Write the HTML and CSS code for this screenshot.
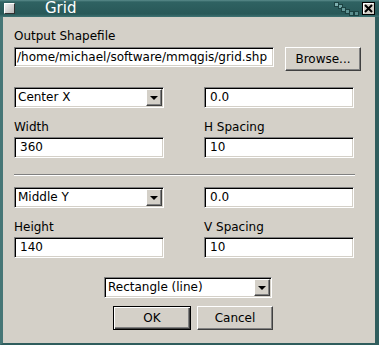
FILE: index.html
```html
<!DOCTYPE html>
<html lang="en">

<head>
  <meta charset="utf-8">
  <title>Grid</title>
  <link rel="stylesheet" href="styles.css">
</head>

<body>
  <div class="window">
    <!-- 标题栏 -->
    <div class="titlebar">
      <span class="menuBox"></span>
      <span class="title">Grid</span>
      <!-- 右上角的装饰小方块和关闭按钮 -->
      <svg class="tbRight" width="42" height="14" viewBox="0 0 42 14">
        <rect x="1.5" y="0.5" width="4" height="4" fill="#7fb0b0" stroke="#1c4242" />
        <rect x="5.5" y="2.5" width="4" height="4" fill="#6fa3a3" stroke="#1c4242" />
        <rect x="8.5" y="5.5" width="4" height="4" fill="#659999" stroke="#1c4242" />
        <rect x="12.5" y="7.5" width="4" height="4" fill="#5f9393" stroke="#1c4242" />
        <rect x="16.5" y="9.5" width="4" height="4" fill="#5a8e8e" stroke="#1c4242" />
        <rect x="21.5" y="9.5" width="4" height="4" fill="#5a8e8e" stroke="#1c4242" />
        <rect x="29.5" y="0.5" width="12" height="12" fill="#d4d0c8" stroke="#000" />
        <path d="M30.5 11.5 V1.5 H40.5" fill="none" stroke="#fff" />
        <path d="M32 3 L39 10 M39 3 L32 10" stroke="#000" stroke-width="2" />
      </svg>
    </div>

    <div class="content">
      <div class="label">Output Shapefile</div>
      <div class="fileRow">
        <div class="entry fileEntry">/home/michael/software/mmqgis/grid.shp</div>
        <div class="btn browse">Browse...</div>
      </div>

      <div class="grid">
        <div class="combo">Center X<span class="arrow"></span></div>
        <div class="entry">0.0</div>
        <div class="field">
          <div class="label">Width</div>
          <div class="entry">360</div>
        </div>
        <div class="field">
          <div class="label">H Spacing</div>
          <div class="entry">10</div>
        </div>
      </div>

      <div class="sep"></div>

      <div class="grid grid2">
        <div class="combo">Middle Y<span class="arrow"></span></div>
        <div class="entry">0.0</div>
        <div class="field">
          <div class="label">Height</div>
          <div class="entry">140</div>
        </div>
        <div class="field">
          <div class="label">V Spacing</div>
          <div class="entry">10</div>
        </div>
      </div>

      <div class="typeRow">
        <div class="combo typeCombo">Rectangle (line)<span class="arrow"></span></div>
      </div>

      <div class="btnRow">
        <div class="btn ok">OK</div>
        <div class="btn cancel">Cancel</div>
      </div>
    </div>
  </div>
</body>

</html>
```

FILE: styles.css
```css
* {
  margin: 0;
  padding: 0;
  box-sizing: border-box;
}

body {
  background: #d4d0c8;
  font-family: "DejaVu Sans", Verdana, sans-serif;
  font-size: 12px;
  color: #000;
}

/* 外框 */
.window {
  width: 379px;
  height: 345px;
  display: flex;
  flex-direction: column;
}

/* 标题栏 */
.titlebar {
  height: 17px;
  flex: none;
  background: linear-gradient(#5b8c8c 0, #2f6262 2px, #285858 14px, #3f7373 17px);
  display: flex;
  align-items: center;
  color: #fff;
}

.menuBox {
  flex: none;
  width: 11px;
  height: 11px;
  margin-left: 4px;
  background: linear-gradient(135deg, #f0f0f0, #b8b8b8);
  border: 1px solid;
  border-color: #fff #303030 #303030 #fff;
}

.title {
  font-size: 15px;
  margin-left: 30px;
  line-height: 17px;
}

.tbRight {
  flex: none;
  display: block;
  margin-left: auto;
  margin-right: 4px;
  margin-top: 1px;
}

/* 内容区 */
.content {
  flex: 1;
  background: #d4d0c8;
  border-left: 3px solid #467676;
  border-right: 4px solid #2f5d5d;
  border-bottom: 2px solid #2f5d5d;
  padding: 12px 0 0 11px;
}

.label {
  line-height: 15px;
  height: 15px;
  white-space: nowrap;
}

.entry,
.combo {
  height: 21px;
  background: #fff;
  border: 1px solid;
  border-color: #808080 #fff #fff #808080;
  box-shadow: inset 1px 1px 0 #000, inset -1px -1px 0 #d4d0c8;
  line-height: 19px;
  padding-left: 5px;
  white-space: nowrap;
  overflow: hidden;
}

.fileRow {
  display: flex;
  align-items: flex-start;
  margin-top: 3px;
}

.fileEntry {
  width: 260px;
  height: 20px;
  line-height: 18px;
  padding-left: 2px;
}

.btn {
  background: #d4d0c8;
  border: 1px solid;
  border-color: #fff #404040 #404040 #fff;
  box-shadow: inset -1px -1px 0 #808080;
  text-align: center;
  line-height: 22px;
  height: 24px;
}

.browse {
  width: 76px;
  margin-left: 11px;
}

.grid {
  display: grid;
  grid-template-columns: 150px 150px;
  column-gap: 40px;
  margin-top: 16px;
}

.grid2 {
  margin-top: 11px;
}

.field {
  margin-top: 12px;
}

.field .entry {
  margin-top: 2px;
}

.combo {
  position: relative;
  padding-left: 3px;
}

/* 下拉箭头按钮 */
.combo .arrow {
  position: absolute;
  right: 1px;
  top: 1px;
  width: 16px;
  height: 17px;
  background: #d4d0c8;
  border: 1px solid;
  border-color: #fff #404040 #404040 #fff;
  box-shadow: inset -1px -1px 0 #808080;
}

.combo .arrow::after {
  content: "";
  position: absolute;
  left: 3px;
  top: 6px;
  border-left: 4px solid transparent;
  border-right: 4px solid transparent;
  border-top: 4px solid #000;
}

.sep {
  width: 341px;
  margin-top: 16px;
  border-top: 1px solid #808080;
  border-bottom: 1px solid #fff;
}

.typeRow {
  margin-top: 19px;
  padding-left: 90px;
}

.typeCombo {
  width: 168px;
}

.btnRow {
  display: flex;
  margin-top: 8px;
  padding-left: 99px;
  gap: 6px;
}

.ok {
  width: 78px;
  border: 1px solid #000;
  box-shadow: inset 1px 1px 0 #fff, inset -1px -1px 0 #404040, inset -2px -2px 0 #808080;
}

.cancel {
  width: 76px;
}
```
